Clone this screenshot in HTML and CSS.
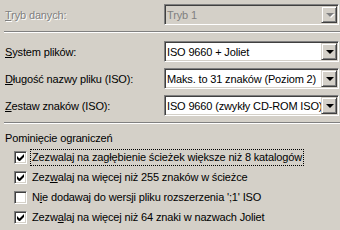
FILE: index.html
```html
<!DOCTYPE html>
<html>
<head>
	<title>Ustawienia ISO</title>
	<link rel="stylesheet" href="styles.css">
</head>
<body>
<div class="panel">
	<div class="row">
		<span class="lbl off"><u>T</u>ryb danych:</span>
		<div class="combo combo-off">
			<span class="val">Tryb 1</span>
			<span class="drop"><i class="arr"></i></span>
		</div>
	</div>
	<div class="sep"></div>
	<div class="row">
		<span class="lbl"><u>S</u>ystem plików:</span>
		<div class="combo">
			<span class="val">ISO 9660 + Joliet</span>
			<span class="drop"><i class="arr"></i></span>
		</div>
	</div>
	<div class="row">
		<span class="lbl"><u>D</u>ługość nazwy pliku (ISO):</span>
		<div class="combo">
			<span class="val">Maks. to 31 znaków (Poziom 2)</span>
			<span class="drop"><i class="arr"></i></span>
		</div>
	</div>
	<div class="row">
		<span class="lbl"><u>Z</u>estaw znaków (ISO):</span>
		<div class="combo">
			<span class="val">ISO 9660 (zwykły CD-ROM ISO)</span>
			<span class="drop"><i class="arr"></i></span>
		</div>
	</div>
	<div class="sep sep2"></div>
	<div class="group-title">Pominięcie ograniczeń</div>
	<div class="checks">
		<label class="chk"><span class="box on"></span><span class="txt focus">Zezwalaj na zagłębienie ścieżek większe niż 8 katalogów</span></label>
		<label class="chk"><span class="box on"></span><span class="txt">Zez<u>w</u>alaj na więcej niż 255 znaków w ścieżce</span></label>
		<label class="chk"><span class="box"></span><span class="txt">N<u>i</u>e dodawaj do wersji pliku rozszerzenia ';1' ISO</span></label>
		<label class="chk"><span class="box on"></span><span class="txt">Zezw<u>a</u>laj na więcej niż 64 znaki w nazwach Joliet</span></label>
	</div>
</div>
</body>
</html>
```
FILE: styles.css
```css
body{
	margin: 0;
	background-color: #d4d0c8;
	font-family: "Liberation Sans", Arial, sans-serif;
	font-size: 11px;
	letter-spacing: -0.15px;
	color: #000;
}
.panel{
	width: 340px;
	height: 230px;
	overflow: hidden;
	padding-top: 4px;
	box-sizing: border-box;
}
.row{
	display: grid;
	grid-template-columns: 159px 175px;
	align-items: center;
	padding-left: 5px;
	height: 21px;
	margin-bottom: 6px;
}
.lbl.off{
	color: #808080;
	text-shadow: 1px 1px 0 #fff;
}
.combo{
	position: relative;
	height: 21px;
	box-sizing: border-box;
	background-color: #fff;
	border: 1px solid;
	border-color: #808080 #fff #fff #808080;
	box-shadow: inset 1px 1px 0 #404040, inset -1px -1px 0 #d4d0c8;
	display: flex;
	align-items: center;
}
.combo-off{
	background-color: #d4d0c8;
	color: #808080;
}
.val{
	padding-left: 2px;
	white-space: nowrap;
}
.drop{
	position: absolute;
	right: 1px;
	top: 1px;
	width: 16px;
	height: 17px;
	box-sizing: border-box;
	background-color: #d4d0c8;
	border: 1px solid;
	border-color: #d4d0c8 #404040 #404040 #d4d0c8;
	box-shadow: inset 1px 1px 0 #fff, inset -1px -1px 0 #808080;
	display: flex;
	align-items: center;
	justify-content: center;
}
.arr{
	width: 0;
	height: 0;
	border-left: 4px solid transparent;
	border-right: 4px solid transparent;
	border-top: 4px solid #000;
	margin-left: 1px;
}
.combo-off .arr{
	border-top-color: #808080;
	filter: drop-shadow(1px 1px 0 #fff);
}
.sep{
	margin: 1px 0 8px 4px;
	border-top: 1px solid #808080;
	border-bottom: 1px solid #fff;
}
.sep2{
	margin-top: 2px;
	margin-bottom: 7px;
}
.group-title{
	padding-left: 5px;
	height: 14px;
	line-height: 14px;
	margin-bottom: 6px;
}
.checks{
	display: flex;
	flex-direction: column;
	gap: 7px;
	padding-left: 14px;
}
.chk{
	display: flex;
	align-items: center;
	height: 13px;
	white-space: nowrap;
}
.box{
	width: 13px;
	height: 13px;
	box-sizing: border-box;
	background-color: #fff;
	border: 1px solid;
	border-color: #808080 #fff #fff #808080;
	box-shadow: inset 1px 1px 0 #404040, inset -1px -1px 0 #d4d0c8;
	margin-right: 4px;
	flex: none;
}
.box.on{
	background: #fff url("data:image/svg+xml,%3Csvg xmlns='http://www.w3.org/2000/svg' width='7' height='7'%3E%3Cpath d='M0 2v3l2 2h1l4-4V0L2.5 4.5z' fill='%23000'/%3E%3C/svg%3E") no-repeat 2px 2px;
}
.txt{
	padding: 1px 1px;
	line-height: 13px;
}
.txt.focus{
	outline: 1px dotted #000;
	outline-offset: 0;
}
```
